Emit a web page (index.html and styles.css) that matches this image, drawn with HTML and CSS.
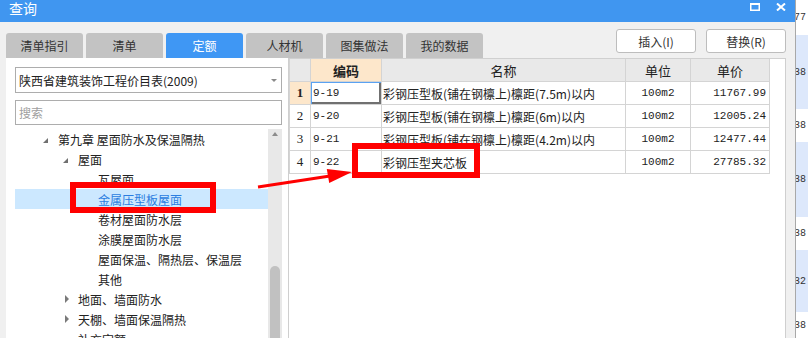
FILE: index.html
```html
<!DOCTYPE html>
<html lang="zh-CN">
<head>
    <meta charset="UTF-8">
    <title>查询</title>
    <link rel="stylesheet" href="styles.css">
</head>
<body>
    <div class="dialog">
        <div class="titlebar">
            <span class="title">查询</span>
            <div class="win-buttons">
                <svg class="win-icon" width="10" height="8" viewBox="0 0 10 8"><rect x="0.75" y="1" width="8.5" height="6.25" fill="none" stroke="#fff" stroke-width="1.5"/><rect x="0" y="0" width="10" height="2" fill="#fff"/></svg>
                <svg class="win-icon" width="10" height="8" viewBox="0 0 10 8"><path d="M1 0.5 L9 7.5 M9 0.5 L1 7.5" stroke="#fff" stroke-width="2"/></svg>
            </div>
        </div>

        <div class="content">
            <div class="toolbar">
                <div class="tabs">
                    <div class="tab">清单指引</div>
                    <div class="tab">清单</div>
                    <div class="tab active">定额</div>
                    <div class="tab">人材机</div>
                    <div class="tab">图集做法</div>
                    <div class="tab">我的数据</div>
                </div>
                <div class="actions">
                    <div class="btn">插入(I)</div>
                    <div class="btn">替换(R)</div>
                </div>
            </div>

            <div class="main">
                <div class="left">
                    <div class="select">
                        <span>陕西省建筑装饰工程价目表(2009)</span>
                        <span class="caret"></span>
                    </div>
                    <div class="search">搜索</div>
                    <div class="tree">
                        <div class="tree-list">
                            <div class="node lvl1"><span class="toggle open"></span>第九章 屋面防水及保温隔热</div>
                            <div class="node lvl2"><span class="toggle open"></span>屋面</div>
                            <div class="node lvl3"><span class="toggle"></span>瓦屋面</div>
                            <div class="node lvl3 selected"><span class="toggle"></span>金属压型板屋面</div>
                            <div class="node lvl3"><span class="toggle"></span>卷材屋面防水层</div>
                            <div class="node lvl3"><span class="toggle"></span>涂膜屋面防水层</div>
                            <div class="node lvl3"><span class="toggle"></span>屋面保温、隔热层、保温层</div>
                            <div class="node lvl3"><span class="toggle"></span>其他</div>
                            <div class="node lvl2"><span class="toggle closed"></span>地面、墙面防水</div>
                            <div class="node lvl2"><span class="toggle closed"></span>天棚、墙面保温隔热</div>
                            <div class="node lvl2"><span class="toggle"></span>补充定额</div>
                        </div>
                        <div class="scrollbar">
                            <div class="scroll-up"></div>
                            <div class="thumb"></div>
                        </div>
                    </div>
                </div>

                <div class="right">
                    <div class="grid">
                        <div class="cell head"></div>
                        <div class="cell head sorted">编码</div>
                        <div class="cell head">名称</div>
                        <div class="cell head">单位</div>
                        <div class="cell head">单价</div>

                        <div class="cell num current">1</div>
                        <div class="cell mono focus">9-19</div>
                        <div class="cell name">彩钢压型板(铺在钢檩上)檩距(7.5m)以内</div>
                        <div class="cell mono unit">100m2</div>
                        <div class="cell mono price">11767.99</div>

                        <div class="cell num">2</div>
                        <div class="cell mono">9-20</div>
                        <div class="cell name">彩钢压型板(铺在钢檩上)檩距(6m)以内</div>
                        <div class="cell mono unit">100m2</div>
                        <div class="cell mono price">12005.24</div>

                        <div class="cell num">3</div>
                        <div class="cell mono">9-21</div>
                        <div class="cell name">彩钢压型板(铺在钢檩上)檩距(4.2m)以内</div>
                        <div class="cell mono unit">100m2</div>
                        <div class="cell mono price">12477.44</div>

                        <div class="cell num">4</div>
                        <div class="cell mono">9-22</div>
                        <div class="cell name">彩钢压型夹芯板</div>
                        <div class="cell mono unit">100m2</div>
                        <div class="cell mono price">27785.32</div>
                    </div>
                </div>
            </div>
        </div>
    </div>

    <div class="strip">
        <div class="strip-row h35">77</div>
        <div class="strip-row alt h74">38</div>
        <div class="strip-row h33">38</div>
        <div class="strip-row alt h75">38</div>
        <div class="strip-row h33">38</div>
        <div class="strip-row alt h62">32</div>
        <div class="strip-row h26">38</div>
    </div>

    <!-- red annotations drawn over the screenshot -->
    <svg class="marks" width="808" height="338" viewBox="0 0 808 338">
        <rect x="73" y="185" width="140" height="25" fill="none" stroke="#f00" stroke-width="6"/>
        <rect x="355" y="146" width="122" height="29" fill="none" stroke="#f00" stroke-width="6"/>
        <line x1="258" y1="187" x2="330" y2="176" stroke="#f00" stroke-width="3"/>
        <polygon points="352,172 326.8,169 329.2,183" fill="#f00"/>
    </svg>
</body>
</html>
```

FILE: styles.css
```css
* {
    box-sizing: border-box;
}

body {
    margin: 0;
    width: 808px;
    height: 338px;
    overflow: hidden;
    display: flex;
    position: relative;
    font-family: "Noto Sans CJK SC", sans-serif;
    font-size: 12px;
    color: #222;
    background: #fff;
}

.dialog {
    width: 795px;
    display: flex;
    flex-direction: column;
    background: #f0f0f0;
}

.titlebar {
    height: 22px;
    flex: none;
    display: flex;
    align-items: flex-start;
    padding: 0 9px;
    background: #4096f0;
    color: #fff;
}

.title {
    font-size: 14px;
    line-height: 14px;
    padding-top: 1px;
}

.win-buttons {
    margin-left: auto;
    display: flex;
    gap: 16px;
    padding-top: 3px;
}

.content {
    flex: 1;
    display: flex;
    flex-direction: column;
    min-height: 0;
    padding: 0 9px 0 6px;
}

.toolbar {
    height: 36px;
    flex: none;
    display: flex;
    align-items: flex-end;
}

.tabs {
    display: flex;
    gap: 3px;
}

.tab {
    width: 77px;
    height: 25px;
    display: flex;
    align-items: center;
    justify-content: center;
    background: #c3c3c3;
    border-radius: 3px 3px 0 0;
    color: #333;
}

.tab.active {
    background: #3f97f4;
    color: #fff;
}

.actions {
    margin-left: auto;
    align-self: flex-start;
    margin-top: 7px;
    display: flex;
    gap: 10px;
}

.btn {
    width: 80px;
    height: 24px;
    display: flex;
    align-items: center;
    justify-content: center;
    background: #fff;
    border: 1px solid #bdbdbd;
    border-radius: 3px;
    color: #333;
}

.main {
    flex: 1;
    display: flex;
    min-height: 0;
}

/* left: library tree */
.left {
    width: 283px;
    display: flex;
    flex-direction: column;
    padding: 9px 6px 0 9px;
    background: #fff;
    border-right: 1px solid #cfcfcf;
}

.select {
    height: 26px;
    display: flex;
    align-items: center;
    padding: 0 3px;
    border: 1px solid #adadad;
}

.caret {
    margin-left: auto;
    margin-right: 1px;
    width: 0;
    height: 0;
    border-left: 3px solid transparent;
    border-right: 3px solid transparent;
    border-top: 3px solid #8a8a8a;
}

.search {
    height: 25px;
    margin-top: 7px;
    display: flex;
    align-items: center;
    padding: 0 3px;
    border: 1px solid #adadad;
    color: #a0a0a0;
}

.tree {
    flex: 1;
    display: flex;
    min-height: 0;
    margin-top: 4px;
}

.tree-list {
    flex: 1;
    overflow: hidden;
}

.node {
    height: 20px;
    display: flex;
    align-items: center;
    white-space: nowrap;
}

.node.lvl1 { padding-left: 27px; }
.node.lvl2 { padding-left: 47px; }
.node.lvl3 { padding-left: 67px; }

.node.selected {
    background: #cce8ff;
    color: #2b7de0;
}

.toggle {
    width: 16px;
    flex: none;
    display: flex;
    align-items: center;
}

.toggle.open::before {
    content: "";
    margin-left: 1px;
    margin-top: 2px;
    border-left: 5px solid transparent;
    border-bottom: 5px solid #707070;
}

.toggle.closed::before {
    content: "";
    margin-left: 3px;
    border-top: 4px solid transparent;
    border-bottom: 4px solid transparent;
    border-left: 4px solid #7a7a7a;
}

.scrollbar {
    width: 14px;
    display: flex;
    flex-direction: column;
    background: #e8e8e8;
}

.scroll-up {
    height: 14px;
    display: flex;
    justify-content: center;
    padding-top: 3px;
}

.scroll-up::before {
    content: "";
    border-left: 3px solid transparent;
    border-right: 3px solid transparent;
    border-bottom: 4px solid #8c8c8c;
    height: 0;
}

.thumb {
    flex: 1;
    margin: 123px 2px 0;
    background: #c1c1c1;
    border-radius: 5px 5px 0 0;
}

/* right: quota list */
.right {
    flex: 1;
    background: #fff;
    border-top: 1px solid #d0d0d0;
    border-right: 1px solid #cfcfcf;
}

.grid {
    display: grid;
    grid-template-columns: 21px 71px 244px 65px 79px;
    grid-auto-rows: 23px;
    width: 481px;
    border-left: 1px solid #d4d4d4;
}

.cell {
    display: flex;
    align-items: center;
    padding: 0 2px;
    border-right: 1px solid #d4d4d4;
    border-bottom: 1px solid #d4d4d4;
    white-space: nowrap;
    overflow: hidden;
}

.cell.head {
    justify-content: center;
    background: #e9e9e9;
    font-size: 13px;
    color: #222;
}

.cell.head.sorted {
    background: #fde7cb;
    font-weight: bold;
}

.cell.num {
    justify-content: center;
    font-family: "Liberation Serif", serif;
    font-size: 13px;
}

.cell.num.current {
    background: #fde7cb;
    font-weight: bold;
}

.cell.mono {
    font-family: "Liberation Mono", monospace;
    font-size: 11px;
}

.cell.focus {
    box-shadow: inset 1px 1px 0 #5aa2f2, inset -2px -2px 0 #707070;
}

.cell.name {
    padding-left: 1px;
}

.cell.unit {
    justify-content: center;
}

.cell.price {
    justify-content: flex-end;
    padding-right: 3px;
}

/* part of the window behind the dialog */
.strip {
    flex: 1;
    display: flex;
    flex-direction: column;
    border-left: 1px solid #a8a8a8;
    overflow: hidden;
}

.strip-row {
    display: flex;
    align-items: center;
    justify-content: flex-end;
    padding-right: 2px;
    font-family: "Liberation Mono", monospace;
    font-size: 10px;
    color: #333;
    white-space: nowrap;
    flex: none;
}

.strip-row.alt {
    background: #dde8fb;
}

.h35 { height: 35px; }
.h74 { height: 74px; }
.h33 { height: 33px; }
.h75 { height: 75px; }
.h62 { height: 62px; }
.h26 { height: 26px; }

.marks {
    position: absolute;
    top: 0;
    left: 0;
    pointer-events: none;
}
```
